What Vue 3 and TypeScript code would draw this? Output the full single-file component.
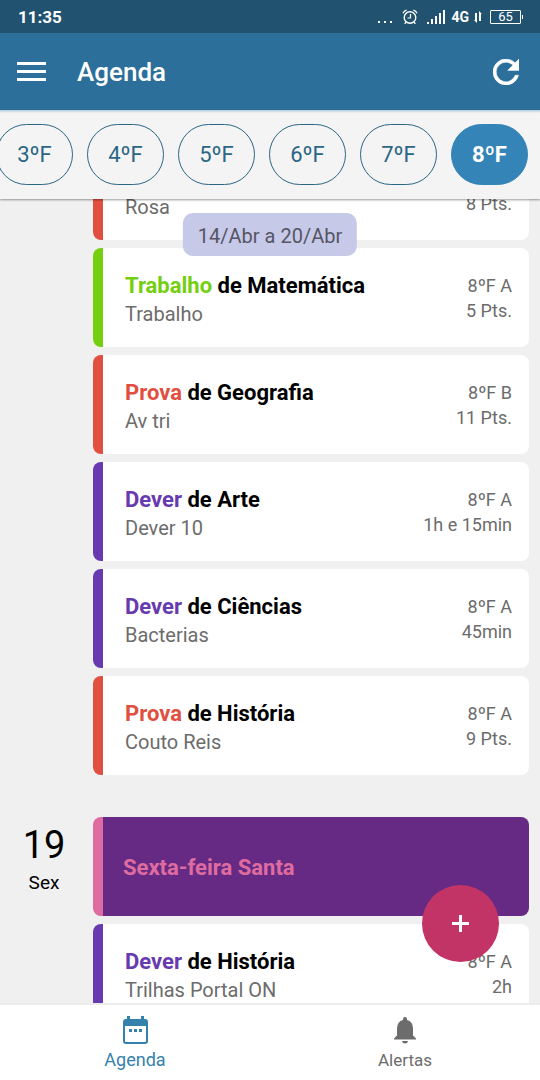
<script setup lang="ts">
import { onMounted, ref } from 'vue'

type Kind = 'trabalho' | 'prova' | 'dever'

interface Task {
  kind: Kind
  label?: string
  subject?: string
  note: string
  group?: string
  amount: string
}

interface Day {
  number?: string
  weekday?: string
  holiday?: string
  tasks: Task[]
}

const grades: string[] = ['3ºF', '4ºF', '5ºF', '6ºF', '7ºF', '8ºF']
const selected = ref('8ºF')
const tab = ref('agenda')

const days: Day[] = [
  {
    tasks: [
      { kind: 'prova', note: 'Rosa', amount: '8 Pts.' },
      { kind: 'trabalho', label: 'Trabalho', subject: 'Matemática', note: 'Trabalho', group: '8ºF A', amount: '5 Pts.' },
      { kind: 'prova', label: 'Prova', subject: 'Geografia', note: 'Av tri', group: '8ºF B', amount: '11 Pts.' },
      { kind: 'dever', label: 'Dever', subject: 'Arte', note: 'Dever 10', group: '8ºF A', amount: '1h e 15min' },
      { kind: 'dever', label: 'Dever', subject: 'Ciências', note: 'Bacterias', group: '8ºF A', amount: '45min' },
      { kind: 'prova', label: 'Prova', subject: 'História', note: 'Couto Reis', group: '8ºF A', amount: '9 Pts.' },
    ],
  },
  {
    number: '19',
    weekday: 'Sex',
    holiday: 'Sexta-feira Santa',
    tasks: [
      { kind: 'dever', label: 'Dever', subject: 'História', note: 'Trilhas Portal ON', group: '8ºF A', amount: '2h' },
    ],
  },
]

const list = ref<HTMLElement | null>(null)

onMounted(() => {
  // Open with most of the first card scrolled past the top edge.
  if (list.value) list.value.scrollTop = 58
})
</script>

<template>
  <div class="app">
    <div class="status">
      <span class="clock">11:35</span>
      <div class="indicators">
        <svg class="dots" width="14" height="16" viewBox="0 0 14 16" fill="currentColor" aria-hidden="true">
          <rect x="0" y="12" width="2" height="2" /><rect x="6" y="12" width="2" height="2" /><rect x="12" y="12" width="2" height="2" />
        </svg>
        <svg class="alarm" width="16" height="16" viewBox="0 0 16 16" fill="none" stroke="currentColor" aria-hidden="true">
          <circle cx="8" cy="8.5" r="5.8" stroke-width="1.4" />
          <path d="M8.5 5v4H5.5" stroke-width="1.2" />
          <path d="M1 4.2Q2 2 4.6 1.2M15 4.2Q14 2 11.4 1.2M4 13.2l-1.4 1.6M12 13.2l1.4 1.6" stroke-width="1.3" />
        </svg>
        <svg class="signal" width="18" height="14" viewBox="0 0 18 14" fill="currentColor" aria-hidden="true">
          <rect x="0" y="12" width="2" height="2" /><rect x="4" y="9" width="2" height="5" /><rect x="8" y="6" width="2" height="8" /><rect x="12" y="3" width="2" height="11" /><rect x="16" y="0" width="2" height="14" />
        </svg>
        <span class="network">4G</span>
        <svg class="data" width="8" height="12" viewBox="0 0 8 12" fill="currentColor" aria-hidden="true">
          <path d="M1 2h2v10L0 9h1zM5 10V0l3 3H7v7z" />
        </svg>
        <span class="battery">65</span>
      </div>
    </div>

    <header class="bar">
      <button class="icon-button" type="button" aria-label="Menu">
        <svg width="29" height="20" viewBox="0 0 29 20" fill="currentColor" aria-hidden="true">
          <rect width="29" height="3" y="0" /><rect width="29" height="3" y="8" /><rect width="29" height="3" y="16" />
        </svg>
      </button>
      <h1>Agenda</h1>
      <button class="icon-button" type="button" aria-label="Atualizar">
        <svg width="26" height="26" viewBox="4 4 16 16" fill="currentColor" aria-hidden="true">
          <path d="M17.65 6.35A7.95 7.95 0 0 0 12 4a8 8 0 1 0 7.73 10h-2.08A6 6 0 1 1 12 6c1.66 0 3.14.69 4.22 1.78L13 11h7V4z" stroke="currentColor" stroke-width=".3" />
        </svg>
      </button>
    </header>

    <nav class="grades" aria-label="Turmas">
      <button
        v-for="grade in grades"
        :key="grade"
        type="button"
        class="grade"
        :class="{ active: grade === selected }"
        :aria-pressed="grade === selected"
        @click="selected = grade"
      >{{ grade }}</button>
    </nav>

    <main class="content">
      <div ref="list" class="list">
        <section v-for="(day, index) in days" :key="index" class="day">
          <div class="date">
            <span class="number">{{ day.number }}</span>
            <span class="weekday">{{ day.weekday }}</span>
          </div>
          <div class="cards">
            <article v-if="day.holiday" class="card holiday">
              <h2>{{ day.holiday }}</h2>
            </article>
            <article v-for="(task, position) in day.tasks" :key="position" class="card" :class="task.kind">
              <div class="info">
                <h2 v-if="task.subject"><span class="kind">{{ task.label }}</span> de {{ task.subject }}</h2>
                <p>{{ task.note }}</p>
              </div>
              <div class="meta">
                <span v-if="task.group">{{ task.group }}</span>
                <span>{{ task.amount }}</span>
              </div>
            </article>
          </div>
        </section>
      </div>
      <div class="week">14/Abr a 20/Abr</div>
      <button class="add" type="button" aria-label="Adicionar">
        <svg width="17" height="17" viewBox="0 0 17 17" fill="currentColor" aria-hidden="true">
          <path d="M7 0h3v7h7v3h-7v7H7v-7H0V7h7z" />
        </svg>
      </button>
    </main>

    <nav class="tabs" aria-label="Principal">
      <button type="button" class="tab" :class="{ current: tab === 'agenda' }" @click="tab = 'agenda'">
        <svg width="25" height="28" viewBox="0 0 25 28" fill="currentColor" aria-hidden="true">
          <path fill-rule="evenodd" d="M4 0h3v3h11V0h3v3h1q3 0 3 3v19q0 3-3 3H3q-3 0-3-3V6q0-3 3-3h1zM2 10v15q0 1 1 1h19q1 0 1-1V10z" />
          <rect x="6" y="13" width="3" height="3" /><rect x="11" y="13" width="3" height="3" /><rect x="16" y="13" width="3" height="3" />
        </svg>
        <span>Agenda</span>
      </button>
      <button type="button" class="tab" :class="{ current: tab === 'alertas' }" @click="tab = 'alertas'">
        <svg width="22" height="28" viewBox="0 0 22 28" fill="currentColor" aria-hidden="true">
          <path d="M9 4V3q0-2 2-2t2 2v1q6 1.500 6 8.500v7l3 3v1H0v-1l3-3v-7Q3 5.500 9 4zM8 25h6q-.5 2.500-3 2.500T8 25z" />
        </svg>
        <span>Alertas</span>
      </button>
    </nav>
  </div>
</template>

<style>
body {
  margin: 0;
}
</style>

<style scoped>
.app {
  display: flex;
  flex-direction: column;
  height: 100vh;
  background: #f0f0f0;
  font-family: Roboto, "Liberation Sans", sans-serif;
  color: #000;
}

button {
  margin: 0;
  padding: 0;
  border: 0;
  background: none;
  color: inherit;
  font: inherit;
  cursor: pointer;
}

svg {
  display: block;
}

h1,
h2,
p {
  margin: 0;
}

.status {
  display: flex;
  flex: none;
  align-items: center;
  justify-content: space-between;
  height: 33px;
  padding: 0 19px 0 18px;
  box-sizing: border-box;
  background: #21526f;
  color: #fff;
}

.clock {
  font-size: 17px;
  font-weight: 700;
}

.indicators {
  display: flex;
  align-items: center;
}

.alarm {
  margin-left: 10px;
}

.signal {
  margin-left: 9px;
}

.network {
  margin-left: 6px;
  font-size: 14px;
  font-weight: 700;
}

.data {
  margin-left: 5px;
}

.battery {
  position: relative;
  width: 29px;
  margin-left: 8px;
  border: 1px solid #fff;
  border-radius: 1px;
  font-size: 13px;
  line-height: 12px;
  text-align: center;
}

.battery::after {
  content: "";
  position: absolute;
  top: 4px;
  right: -3px;
  width: 1px;
  height: 4px;
  background: #fff;
}

.bar {
  display: flex;
  flex: none;
  align-items: center;
  height: 77px;
  padding: 0 21px 0 17px;
  box-sizing: border-box;
  background: #2b6f9a;
  color: #fff;
}

.bar h1 {
  flex: 1;
  margin-left: 31px;
  font-size: 26px;
  font-weight: 500;
}

.grades {
  position: relative;
  z-index: 2;
  display: flex;
  flex: none;
  gap: 14px;
  justify-content: flex-end;
  padding: 14px 12px;
  overflow: hidden;
  background: linear-gradient(#b4cadf, #f4f4f4 3px);
  box-shadow: 0 1px 2px #0006;
}

.grade {
  flex: none;
  width: 77px;
  height: 61px;
  border: 1px solid #2b6684;
  border-radius: 31px;
  color: #2b6684;
  font-size: 22px;
}

.grade.active {
  border-color: #3484b8;
  background: #3484b8;
  color: #fff;
  font-weight: 700;
}

.content {
  position: relative;
  flex: 1;
  min-height: 0;
}

.list {
  height: 100%;
  overflow-y: auto;
  scrollbar-width: none;
}

.day {
  display: grid;
  grid-template-columns: 93px 1fr;
  padding-right: 11px;
}

.day + .day {
  margin-top: 42px;
}

.date {
  display: flex;
  flex-direction: column;
  align-items: center;
  padding: 5px 5px 0 0;
}

.number {
  font-size: 38px;
  line-height: 46px;
}

.weekday {
  font-size: 19px;
  line-height: 30px;
}

.cards {
  display: flex;
  flex-direction: column;
  gap: 8px;
}

.card {
  display: flex;
  align-items: center;
  justify-content: space-between;
  height: 99px;
  padding: 1px 17px 0 22px;
  box-sizing: border-box;
  border-left: 10px solid var(--accent);
  border-radius: 8px;
  background: #fff;
}

.card.trabalho {
  --accent: #75cf11;
}

.card.prova {
  --accent: #e04f40;
}

.card.dever {
  --accent: #673ab0;
}

.card.holiday {
  --accent: #df6ca0;
  padding-top: 2px;
  padding-left: 20px;
  background: #672a84;
}

.holiday h2,
.kind {
  color: var(--accent);
}

.info,
.meta {
  display: flex;
  flex-direction: column;
  justify-content: flex-end;
}

.info {
  min-height: 56px;
  padding-top: 3px;
}

h2 {
  font-size: 22px;
  font-weight: 700;
  line-height: 28px;
}

p {
  color: #6c6c6c;
  font-size: 20px;
  line-height: 28px;
}

.meta {
  align-items: flex-end;
  min-height: 50px;
  color: #6c6c6c;
  font-size: 18px;
  line-height: 25px;
}

.week {
  position: absolute;
  top: 14px;
  left: 50%;
  padding: 3px 15px 0;
  border-radius: 10px;
  background: #c7c9e8;
  color: #555564;
  font-size: 20px;
  line-height: 40px;
  white-space: nowrap;
  transform: translateX(-50%);
}

.add {
  position: absolute;
  right: 41px;
  bottom: 41px;
  display: flex;
  align-items: center;
  justify-content: center;
  width: 77px;
  height: 77px;
  border-radius: 50%;
  background: #c23465;
  color: #fff;
}

.tabs {
  display: flex;
  flex: none;
  height: 77px;
  box-sizing: border-box;
  border-top: 2px solid #ececec;
  background: #fff;
}

.tab {
  display: flex;
  flex: 1;
  flex-direction: column;
  align-items: center;
  justify-content: center;
  gap: 4px;
  padding-top: 2px;
  color: #6c6c6c;
  font-size: 17px;
  line-height: 24px;
}

.tab.current {
  color: #3482ac;
  font-size: 18px;
}
</style>
